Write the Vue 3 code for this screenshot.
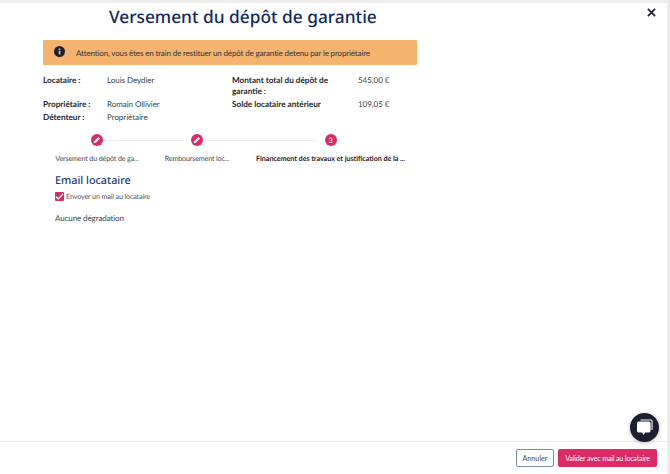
<script setup>
const rows = [
  [{ l: 'Locataire :', v: 'Louis Deydier' }, { l: 'Montant total du dépôt de garantie :', v: '545,00 €' }],
  [{ l: 'Propriétaire :', v: 'Romain Ollivier' }, { l: 'Solde locataire antérieur', v: '109,05 €' }],
  [{ l: 'Détenteur :', v: 'Propriétaire' }, null],
]
</script>

<template>
  <div class="page">
    <div class="modal">
      <main class="content">
        <h1 class="title">Versement du dépôt de garantie</h1>
        <button class="close" aria-label="Fermer">
          <svg width="9" height="9" viewBox="0 0 10 10"><path d="M1 1l8 8M9 1l-8 8" stroke="#1f2333" stroke-width="1.9" fill="none"/></svg>
        </button>
        <div class="alert">
          <svg class="info" width="11" height="11" viewBox="0 0 11 11">
            <circle cx="5.5" cy="5.5" r="5.5" fill="#1b1f30"/>
            <rect x="4.7" y="4.7" width="1.7" height="3.7" fill="#f4b36f"/>
            <rect x="4.7" y="2.5" width="1.7" height="1.5" fill="#f4b36f"/>
          </svg>
          <span>Attention, vous êtes en train de restituer un dépôt de garantie detenu par le propriétaire</span>
        </div>
        <div class="info-grid">
          <div v-for="(r, i) in rows" :key="i" class="info-row">
            <div class="pair left">
              <b>{{ r[0].l }}</b><span>{{ r[0].v }}</span>
            </div>
            <div v-if="r[1]" class="pair right">
              <b>{{ r[1].l }}</b><span>{{ r[1].v }}</span>
            </div>
          </div>
        </div>
        <div class="stepper">
          <div class="step s1">
            <div class="dot">
              <svg width="8" height="8" viewBox="0 0 8 8"><path d="M0.8 7.2l.4-2L5.4 1l1.6 1.6L2.8 6.8z" fill="#fff"/></svg>
            </div>
            <div class="lab">Versement du dépôt de ga...</div>
          </div>
          <div class="line l1"></div>
          <div class="step s2">
            <div class="dot">
              <svg width="8" height="8" viewBox="0 0 8 8"><path d="M0.8 7.2l.4-2L5.4 1l1.6 1.6L2.8 6.8z" fill="#fff"/></svg>
            </div>
            <div class="lab">Remboursement loc...</div>
          </div>
          <div class="line l2"></div>
          <div class="step s3">
            <div class="dot">3</div>
            <div class="lab strong">Financement des travaux et justification de la ...</div>
          </div>
        </div>
        <h2 class="sub">Email locataire</h2>
        <label class="check">
          <span class="box">
            <svg width="9" height="9" viewBox="0 0 9 9"><path d="M1 4.7l2.3 2.2L8 2" stroke="#fff" stroke-width="1.3" fill="none"/></svg>
          </span>
          Envoyer un mail au locataire
        </label>
        <p class="none">Aucune dégradation</p>
      </main>
      <footer class="foot">
        <button class="btn ghost">Annuler</button>
        <button class="btn primary">Valider avec mail au locataire</button>
      </footer>
      <button class="chat" aria-label="Chat">
        <svg width="16" height="17" viewBox="0 0 16 17">
          <path d="M3.5 0.5H14a1.6 1.6 0 0 1 1.6 1.6V11h-1.1V1.6H3.5z" fill="#fff"/>
          <path d="M1.6 2.6H12a1.6 1.6 0 0 1 1.6 1.6v7.6a1.6 1.6 0 0 1-1.6 1.6H8.2L6.6 16 5 13.4H1.6A1.6 1.6 0 0 1 0 11.8V4.2a1.6 1.6 0 0 1 1.6-1.6z" fill="#fff"/>
        </svg>
      </button>
    </div>
  </div>
</template>

<style scoped>
.page {
  width: 670px;
  height: 474px;
  background: #ececec;
  padding: 3px 3px 0 0;
  box-sizing: border-box;
  font-family: Lato, "Open Sans", sans-serif;
  color: #3c3f48;
  overflow: hidden;
  text-rendering: geometricPrecision;
}
.modal {
  position: relative;
  height: 471px;
  background: #fff;
  display: flex;
  flex-direction: column;
}
.content {
  position: relative;
  flex: 1;
  padding: 0 0 0 43px;
}
.title {
  margin: 0 0 0 66px;
  font-size: 17.3px;
  line-height: 30px;
  font-weight: 500;
  color: #10295c;
  font-family: "Noto Sans", sans-serif;
  white-space: nowrap;
}
.close {
  position: absolute;
  right: 11px;
  top: 5px;
  width: 9px;
  height: 9px;
  padding: 0;
  border: 0;
  background: none;
  display: flex;
}
.alert {
  margin-top: 7px;
  width: 374px;
  height: 25px;
  box-sizing: border-box;
  background: #f4b36f;
  border-radius: 1px;
  display: flex;
  align-items: center;
  padding-left: 11px;
  font-size: 8px;
  letter-spacing: -0.15px;
  color: #33333a;
  gap: 11px;
}
.info { flex: none; margin-top: -3px; }
.info-grid {
  margin-top: 10px;
  width: 374px;
  font-size: 8px;
  line-height: 11px;
}
.info-row { display: flex; margin-bottom: 2px; }
.pair { display: flex; }
.pair b { font-weight: 700; color: #25272e; font-size: 8.2px; }
.pair span { letter-spacing: -0.05px; }
.left { width: 189px; }
.left b { width: 64px; }
.right b { width: 126px; }
.stepper {
  position: relative;
  display: flex;
  align-items: flex-start;
  margin-top: 11px;
  font-size: 7.2px;
  letter-spacing: -0.17px;
  height: 36px;
}
.step {
  display: flex;
  flex-direction: column;
  align-items: center;
  flex: none;
}
.s1 { width: 84px; margin-left: 12px; }
.s2 { width: 66px; margin-left: 25px; }
.s3 { width: 151px; margin-left: 25px; }
.dot {
  width: 12px;
  height: 12px;
  border-radius: 50%;
  background: #dc2a66;
  color: #fff;
  font-size: 7.5px;
  display: flex;
  align-items: center;
  justify-content: center;
}
.lab {
  margin-top: 8px;
  white-space: nowrap;
  color: #4a4c55;
}
.strong { font-weight: 700; color: #1f2128; letter-spacing: -0.05px; }
.line {
  position: absolute;
  top: 5.5px;
  height: 1px;
  background: #eeeeee;
}
.l1 { left: 61px; width: 80px; }
.l2 { left: 161px; width: 113px; }
.sub {
  margin: 3px 0 0 12px;
  font-size: 10.8px;
  line-height: 16px;
  font-weight: 500;
  color: #1b3a73;
  font-family: "Noto Sans", sans-serif;
}
.check {
  display: flex;
  align-items: center;
  gap: 2px;
  margin: 3px 0 0 12px;
  font-size: 7.2px;
  letter-spacing: -0.15px;
  line-height: 9px;
  color: #55575f;
}
.box {
  width: 9px;
  height: 9px;
  background: #dc2a66;
  border-radius: 1px;
  display: flex;
}
.none {
  margin: 11px 0 0 12px;
  font-size: 8px;
  letter-spacing: -0.1px;
  line-height: 12px;
  color: #3c3f48;
}
.foot {
  flex: none;
  box-sizing: border-box;
  height: 33px;
  border-top: 1px solid #ececec;
  display: flex;
  justify-content: flex-end;
  align-items: flex-start;
  gap: 4px;
  padding: 7px 10px 0 0;
}
.btn {
  height: 18px;
  padding: 0;
  font-family: inherit;
  font-size: 7.2px;
  border-radius: 2px;
  white-space: nowrap;
}
.ghost {
  width: 38px;
  border: 1px solid #7a8ba3;
  background: #fff;
  color: #4a4c55;
}
.primary {
  width: 99px;
  border: 0;
  background: #dc2a66;
  color: #fff;
  letter-spacing: -0.2px;
}
.chat {
  position: absolute;
  left: 630px;
  top: 410px;
  width: 29px;
  height: 29px;
  border-radius: 50%;
  background: #1b1f30;
  border: 0;
  padding: 0;
  display: flex;
  align-items: center;
  justify-content: center;
  box-shadow: 0 1px 4px rgba(0,0,0,.25);
}
</style>
